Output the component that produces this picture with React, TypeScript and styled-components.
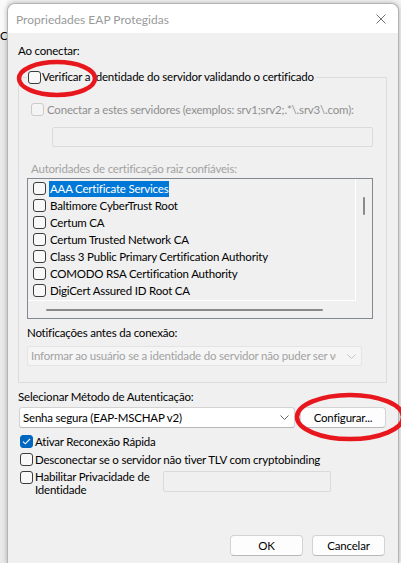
import styled, { createGlobalStyle } from 'styled-components';

const GlobalStyle = createGlobalStyle`
  html, body {
    margin: 0;
    padding: 0;
    background: #f3f3f3;
  }
  body {
    font-family: Lato, 'Liberation Sans', sans-serif;
    font-size: 11.5px;
    letter-spacing: -0.2px;
    color: #000;
    overflow: hidden;
  }
  * {
    box-sizing: border-box;
  }
`;

const Screen = styled.div`
  position: relative;
  width: 401px;
  height: 563px;
  overflow: hidden;
  display: flex;
  align-items: flex-start;
`;

const BackWindow = styled.div`
  flex: none;
  width: 7px;
  height: 563px;
  overflow: hidden;
  white-space: nowrap;
  background: linear-gradient(#f9f9f9 0 33px, #e9e9e9 33px);
  padding-top: 29px;
`;

const Dialog = styled.div`
  flex: none;
  width: 392px;
  height: 560px;
  margin-top: 3px;
  border: 1px solid #b4b4b4;
  border-bottom: none;
  border-radius: 8px 8px 0 0;
  background: #f0f0f0;
  box-shadow: 0 0 5px rgba(0, 0, 0, 0.28);
  display: flex;
  flex-direction: column;
  overflow: hidden;
  z-index: 1;
`;

const TitleBar = styled.div`
  height: 29px;
  flex: none;
  background: #fff;
  display: flex;
  align-items: center;
  justify-content: space-between;
  padding: 1px 12px 0 8px;
  color: #9a9a9a;
  font-size: 12px;
  letter-spacing: 0;
`;

const Body = styled.div`
  flex: 1;
  display: flex;
  flex-direction: column;
  padding: 10px 11px 7px 10px;
`;

const Label = styled.div<{ $disabled?: boolean; $indent?: number; $gap?: number }>`
  line-height: 16px;
  white-space: nowrap;
  color: ${(p) => (p.$disabled ? '#a2a2a2' : '#000')};
  margin-left: ${(p) => p.$indent ?? 0}px;
  margin-top: ${(p) => p.$gap ?? 0}px;
`;

const Group = styled.fieldset`
  margin: 11px 0 0 0;
  padding: 17px 13px 16px 8px;
  border: 1px solid #dcdcdc;
  min-width: 0;
`;

const Legend = styled.legend`
  padding: 0 2px 0 1px;
  height: 14px;
  line-height: 14px;
  display: flex;
  align-items: center;
  gap: 1px;
`;

const Box = styled.span<{ $checked?: boolean; $disabled?: boolean }>`
  flex: none;
  width: 13px;
  height: 13px;
  border-radius: 3px;
  border: 1px solid
    ${(p) => (p.$checked ? '#0067c0' : p.$disabled ? '#cbcbcb' : '#3c3c3c')};
  background: ${(p) => (p.$checked ? '#0067c0' : p.$disabled ? '#f4f4f4' : '#f8f8f8')};
  display: flex;
  align-items: center;
  justify-content: center;
`;

function Checkbox({ checked, disabled }: { checked?: boolean; disabled?: boolean }) {
  return (
    <Box $checked={checked} $disabled={disabled}>
      {checked && (
        <svg width="9" height="7" viewBox="0 0 9 7">
          <polyline points="1,3.6 3.3,5.8 8,1" fill="none" stroke="#fff" strokeWidth="1.1" />
        </svg>
      )}
    </Box>
  );
}

const CheckRow = styled.div<{ $indent?: number; $gap?: number; $space?: number; $top?: boolean }>`
  display: flex;
  align-items: ${(p) => (p.$top ? 'flex-start' : 'center')};
  min-height: 16px;
  gap: ${(p) => p.$space ?? 2}px;
  margin-left: ${(p) => p.$indent ?? 0}px;
  margin-top: ${(p) => p.$gap ?? 0}px;
  white-space: nowrap;
`;

const BoxSlot = styled.span`
  display: flex;
  margin-top: 2px;
`;

const DisabledText = styled.span`
  color: #8f8f8f;
`;

const FlatInput = styled.div<{ $width: number; $indent?: number; $gap?: number; $height?: number }>`
  width: ${(p) => p.$width}px;
  height: ${(p) => p.$height ?? 20}px;
  margin-left: ${(p) => p.$indent ?? 0}px;
  margin-top: ${(p) => p.$gap ?? 0}px;
  border: 1px solid #dadada;
  border-radius: 2px;
  background: #f0f0f0;
  flex: none;
`;

const ListBox = styled.div`
  margin-top: 1px;
  border: 1px solid #828790;
  display: grid;
  grid-template-columns: 328px 17px;
  grid-template-rows: 122px 17px;
  background: #f0f0f0;
`;

const ListItems = styled.div`
  border-right: 1px solid #fff;
  border-bottom: 1px solid #fff;
  padding-top: 1px;
  overflow: hidden;
`;

const ListItem = styled.div`
  height: 17px;
  display: flex;
  align-items: center;
  padding-left: 5px;
  gap: 3px;
  white-space: nowrap;
`;

const ItemText = styled.span<{ $selected?: boolean }>`
  padding: 0 1px;
  line-height: 16px;
  background: ${(p) => (p.$selected ? '#0078d7' : 'transparent')};
  color: ${(p) => (p.$selected ? '#fff' : '#000')};
`;

const VScroll = styled.div`
  display: flex;
  justify-content: center;
  padding: 18px 1px 0 0;
`;

const VThumb = styled.div`
  width: 2px;
  height: 18px;
  border-radius: 1px;
  background: #8a8a8a;
`;

const HScroll = styled.div`
  display: flex;
  align-items: center;
  padding: 1px 0 0 18px;
`;

const HThumb = styled.div`
  width: 277px;
  height: 2px;
  border-radius: 1px;
  background: #8a8a8a;
`;

const Select = styled.div<{ $width: number; $disabled?: boolean; $gap?: number; $indent?: number }>`
  flex: none;
  width: ${(p) => p.$width}px;
  height: ${(p) => (p.$disabled ? 20 : 21)}px;
  margin-top: ${(p) => p.$gap ?? 0}px;
  margin-left: ${(p) => p.$indent ?? 0}px;
  border: 1px solid ${(p) => (p.$disabled ? '#e4e4e4' : '#d3d3d3')};
  border-bottom-color: ${(p) => (p.$disabled ? '#e4e4e4' : '#b8b8b8')};
  border-radius: 3px;
  background: ${(p) => (p.$disabled ? '#f5f5f5' : '#fff')};
  color: ${(p) => (p.$disabled ? '#a2a2a2' : '#000')};
  display: flex;
  align-items: center;
  padding: 0 5px 0 3px;
  gap: ${(p) => (p.$disabled ? 11 : 6)}px;
`;

const SelectText = styled.span`
  flex: 1;
  overflow: hidden;
  white-space: nowrap;
  line-height: 16px;
`;

function Chevron({ color }: { color: string }) {
  return (
    <svg width="9" height="5" viewBox="0 0 9 5" style={{ flex: 'none' }}>
      <polyline points="0.5,0.5 4.5,4.5 8.5,0.5" fill="none" stroke={color} strokeWidth="1" />
    </svg>
  );
}

const AuthRow = styled.div`
  display: flex;
  gap: 5px;
  margin-top: 2px;
`;

const Button = styled.button<{ $width: number }>`
  flex: none;
  width: ${(p) => p.$width}px;
  height: 21px;
  padding: 0;
  border: 1px solid #d3d3d3;
  border-bottom-color: #b9b9b9;
  border-radius: 4px;
  background: #fdfdfd;
  font: inherit;
  letter-spacing: inherit;
  color: #000;
  line-height: 16px;
`;

const PrivacyLabel = styled.span`
  width: 126px;
  padding-top: 1px;
  line-height: 13px;
  white-space: normal;
`;

const Footer = styled.div`
  margin-top: auto;
  display: flex;
  justify-content: flex-end;
  gap: 9px;
  padding-right: 2px;
`;

const Marks = styled.svg`
  position: absolute;
  left: 0;
  top: 0;
  pointer-events: none;
  z-index: 2;
`;

const authorities = [
  'AAA Certificate Services',
  'Baltimore CyberTrust Root',
  'Certum CA',
  'Certum Trusted Network CA',
  'Class 3 Public Primary Certification Authority',
  'COMODO RSA Certification Authority',
  'DigiCert Assured ID Root CA',
];

export default function App() {
  return (
    <Screen>
      <GlobalStyle />
      <BackWindow>Co</BackWindow>
      <Dialog>
        <TitleBar>
          <span>Propriedades EAP Protegidas</span>
          <svg width="10" height="10" viewBox="0 0 10 10">
            <path d="M0.5 0.5 L9.5 9.5 M9.5 0.5 L0.5 9.5" stroke="#707070" strokeWidth="1" />
          </svg>
        </TitleBar>
        <Body>
          <Label>Ao conectar:</Label>
          <Group>
            <Legend>
              <Checkbox />
              <span>Verificar a identidade do servidor validando o certificado</span>
            </Legend>
            <CheckRow $indent={4} $space={3}>
              <Checkbox disabled />
              <DisabledText>Conectar a estes servidores (exemplos: srv1;srv2;.*\.srv3\.com):</DisabledText>
            </CheckRow>
            <FlatInput $width={321} $indent={25} $gap={10} />
            <Label $disabled $indent={4} $gap={14}>
              Autoridades de certificação raiz confiáveis:
            </Label>
            <ListBox>
              <ListItems>
                {authorities.map((name, i) => (
                  <ListItem key={name}>
                    <Checkbox />
                    <ItemText $selected={i === 0}>{name}</ItemText>
                  </ListItem>
                ))}
              </ListItems>
              <VScroll>
                <VThumb />
              </VScroll>
              <HScroll>
                <HThumb />
              </HScroll>
              <div />
            </ListBox>
            <Label $gap={6}>Notificações antes da conexão:</Label>
            <Select $width={335} $disabled $gap={5}>
              <SelectText>Informar ao usuário se a identidade do servidor não puder ser verificada</SelectText>
              <Chevron color="#c4c4c4" />
            </Select>
          </Group>
          <Label $gap={6}>Selecionar Método de Autenticação:</Label>
          <AuthRow>
            <Select $width={276} $indent={1}>
              <SelectText>Senha segura (EAP-MSCHAP v2)</SelectText>
              <Chevron color="#666" />
            </Select>
            <Button $width={86}>Configurar...</Button>
          </AuthRow>
          <CheckRow $indent={2} $gap={5}>
            <Checkbox checked />
            <span>Ativar Reconexão Rápida</span>
          </CheckRow>
          <CheckRow $indent={2} $gap={2}>
            <Checkbox />
            <span>Desconectar se o servidor não tiver TLV com cryptobinding</span>
          </CheckRow>
          <CheckRow $indent={2} $gap={2} $top>
            <BoxSlot>
              <Checkbox />
            </BoxSlot>
            <PrivacyLabel>Habilitar Privacidade de Identidade</PrivacyLabel>
            <FlatInput $width={168} $height={21} $gap={2} />
          </CheckRow>
          <Footer>
            <Button $width={73}>OK</Button>
            <Button $width={73}>Cancelar</Button>
          </Footer>
        </Body>
      </Dialog>
      <Marks width="401" height="563" viewBox="0 0 401 563">
        <ellipse cx="57" cy="78.5" rx="38" ry="16.5" fill="none" stroke="#e8161d" strokeWidth="4.5" />
        <ellipse cx="350" cy="417" rx="53" ry="22" fill="none" stroke="#e8161d" strokeWidth="4.5" />
      </Marks>
    </Screen>
  );
}
